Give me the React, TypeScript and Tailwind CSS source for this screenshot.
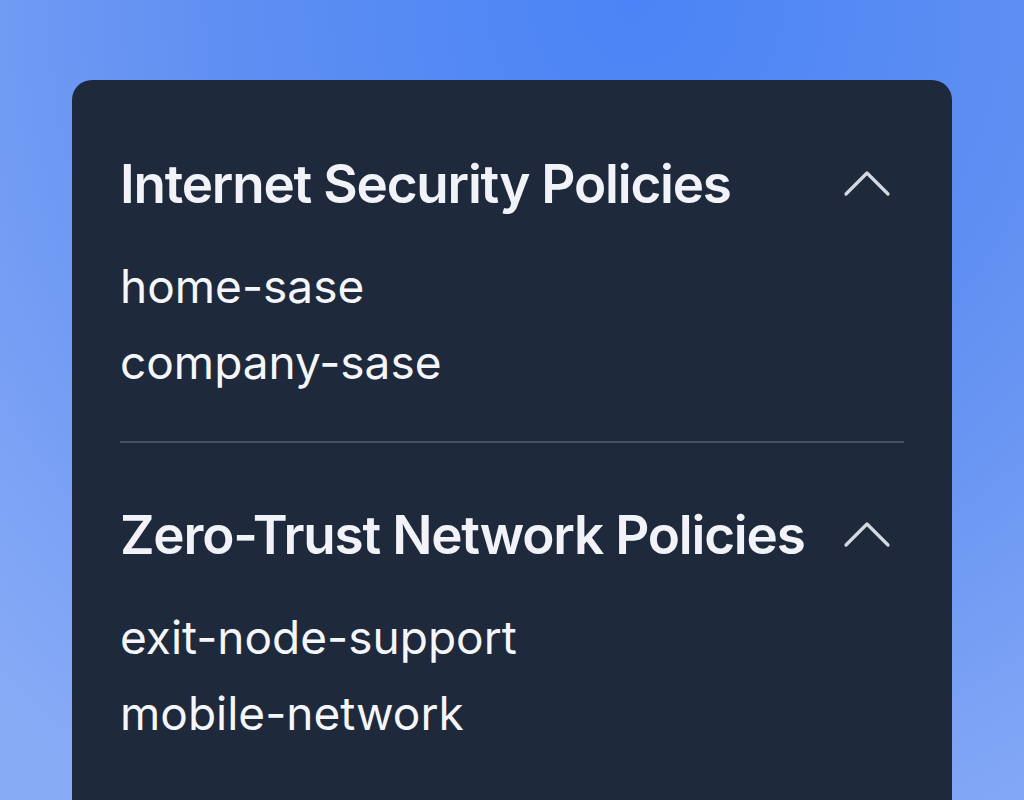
import React from 'react'

type Section = { title: string; items: string[] }

const sections: Section[] = [
  { title: 'Internet Security Policies', items: ['home-sase', 'company-sase'] },
  { title: 'Zero-Trust Network Policies', items: ['exit-node-support', 'mobile-network'] },
]

const Chevron = () => (
  <svg width="48" height="28" viewBox="0 0 48 28" fill="none" className="mr-[13px] shrink-0">
    <path d="M3 24 L24 3 L45 24" stroke="#d4d8e0" strokeWidth="3.2" strokeLinecap="round" strokeLinejoin="round" />
  </svg>
)

const App: React.FC = () => {
  return (
    <div className="min-h-screen h-[800px] overflow-hidden bg-[radial-gradient(ellipse_90%_120%_at_62%_0%,#4a84f6_0%,#5f8ff2_45%,#88abf6_100%)] pt-[80px] px-[72px]" style={{ fontFamily: 'Inter, "Noto Sans", sans-serif' }}>
      <div className="bg-[#1e293b] rounded-t-[20px] h-[800px] px-12 pt-[68px]">
        {sections.map((s, i) => (
          <div key={s.title}>
            {i > 0 && <div className="h-[2px] bg-[#434f62] mt-[41px] mb-[56px]" />}
            <div className="flex items-center justify-between h-[72px]">
              <h2 className="text-[53px] font-semibold leading-[72px] tracking-[-1.2px] text-[#f1f3f8]">{s.title}</h2>
              <Chevron />
            </div>
            <ul className="mt-[28px]">
              {s.items.map(it => (
                <li key={it} className="text-[46px] leading-[76px] text-[#f4f6fa]">{it}</li>
              ))}
            </ul>
          </div>
        ))}
      </div>
    </div>
  )
}

export default App
